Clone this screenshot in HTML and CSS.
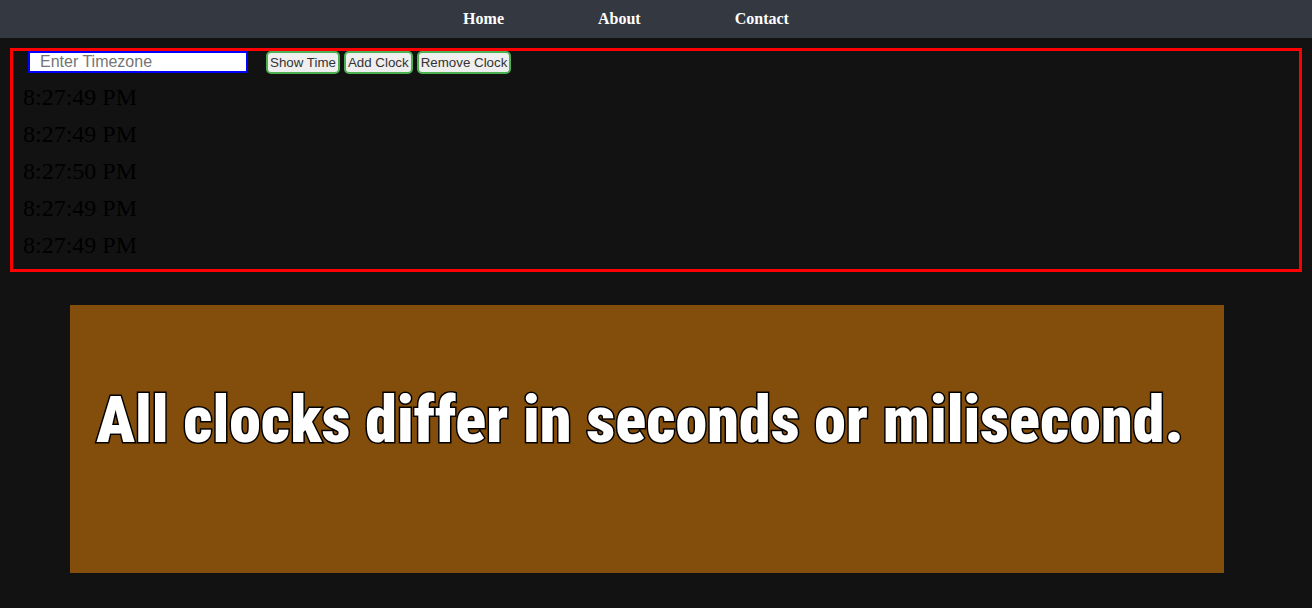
FILE: index.html
```html
<!DOCTYPE html>
<html lang="en">
<head>
<meta charset="utf-8">
<title>World Clocks</title>
<link rel="stylesheet" href="styles.css">
</head>
<body>
<nav class="nav">
  <a class="nav-link" href="#home">Home</a>
  <a class="nav-link" href="#about">About</a>
  <a class="nav-link" href="#contact">Contact</a>
</nav>
<main>
  <section class="clocks">
    <form class="controls">
      <input class="zone" type="text" placeholder="Enter Timezone" aria-label="Timezone">
      <button class="action" type="button">Show Time</button>
      <button class="action" type="button">Add Clock</button>
      <button class="action" type="button">Remove Clock</button>
    </form>
    <p class="clock">8:27:49 PM</p>
    <p class="clock">8:27:49 PM</p>
    <p class="clock">8:27:50 PM</p>
    <p class="clock">8:27:49 PM</p>
    <p class="clock">8:27:49 PM</p>
  </section>
  <section class="banner">
    <h1 class="banner-text">All clocks differ in seconds or milisecond.</h1>
  </section>
</main>
</body>
</html>
```
FILE: styles.css
```css
body {
  margin: 0;
  background: #121212;
  color: #000;
  font-family: "Liberation Serif", "Times New Roman", serif;
}

.nav {
  display: flex;
  justify-content: center;
  gap: 94px;
  padding: 10px 60px 10px 0;
  background: #343840;
}

.nav-link {
  color: #fff;
  font-size: 16px;
  font-weight: bold;
  line-height: 18px;
  text-decoration: none;
}

.clocks {
  margin: 10px;
  border: 3px solid #f00;
}

.controls {
  display: flex;
  align-items: flex-start;
  gap: 4px;
  margin-left: 15px;
}

.zone {
  box-sizing: border-box;
  width: 220px;
  height: 22px;
  margin-right: 14px;
  padding: 0 10px;
  border: 2px solid #00f;
  border-radius: 0;
  background: #fff;
  font-family: "Liberation Sans", Arial, sans-serif;
  font-size: 16px;
}

.action {
  height: 23px;
  padding: 0 2px;
  border: 2px solid #4caf50;
  border-radius: 5px;
  background: #efefef;
  color: #333;
  font-family: "Liberation Sans", Arial, sans-serif;
}

.clock {
  margin: 10px;
  font-size: 24px;
  line-height: 27px;
}

.banner {
  display: flex;
  justify-content: center;
  margin: 33px 88px 35px 70px;
  padding: 71px 14px 107px 0;
  background: #834e0b;
}

.banner-text {
  margin: 0;
  color: #fff;
  font-family: Impact, "Roboto Condensed", Roboto, sans-serif;
  font-size: 64px;
  font-weight: 900;
  line-height: 90px;
  white-space: nowrap;
  -webkit-text-stroke: 3px #000;
  paint-order: stroke fill;
}
```
